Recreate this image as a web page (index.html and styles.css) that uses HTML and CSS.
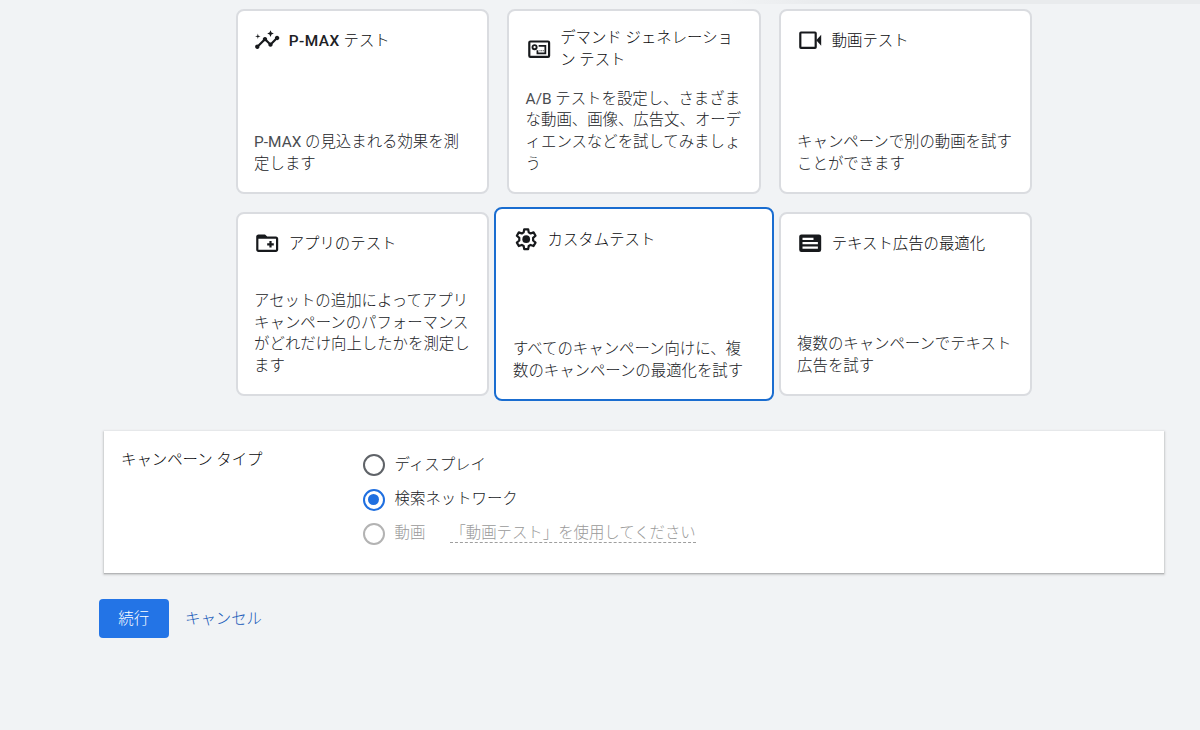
FILE: index.html
```html
<!DOCTYPE html>
<html lang="ja">
<head>
<meta charset="utf-8">
<title>テスト</title>
<link rel="stylesheet" href="styles.css">
</head>
<body>
<div class="top-edge"></div>
<main class="page">
  <section class="cards">
    <article class="card">
      <h2 class="card-title">
        <svg class="icon" viewBox="0 0 24 24"><path d="M21 8c-1.45 0-2.26 1.44-1.93 2.51l-3.55 3.56c-.3-.09-.74-.09-1.04 0l-2.55-2.55C12.27 10.45 11.46 9 10 9c-1.45 0-2.27 1.44-1.93 2.52l-4.56 4.55C2.44 15.74 1 16.55 1 18c0 1.1.9 2 2 2 1.45 0 2.26-1.44 1.93-2.51l4.55-4.56c.3.09.74.09 1.04 0l2.55 2.55C12.73 16.55 13.54 18 15 18c1.45 0 2.27-1.44 1.93-2.52l3.56-3.55C21.56 12.26 23 11.45 23 10c0-1.1-.9-2-2-2z"/><path d="M15 9l.94-2.07L18 6l-2.06-.93L15 3l-.92 2.07L12 6l2.08.93zM3.5 11L4 9l2-.5L4 8l-.5-2L3 8l-2 .5L3 9z"/></svg>
        <span class="title-text"><span class="latin">P-MAX</span> テスト</span>
      </h2>
      <p class="card-text"><span class="latin-text">P-MAX</span> の見込まれる効果を測<br>定します</p>
    </article>
    <article class="card">
      <h2 class="card-title">
        <svg class="icon" viewBox="0 0 24 24"><g fill="none" stroke="currentColor"><rect x="3" y="5" width="18" height="14" rx="1" stroke-width="2"/><circle cx="7.8" cy="10.2" r="1.9" stroke-width="1.7"/><path d="M11.5 9h6.1v6.8h-7.2V13" stroke-width="1.6"/><path d="M12.3 13.4h.9m.6 0h.9m.6 0h.9" stroke-width=".8"/></g></svg>
        <span class="title-text title-text-long">デマンド ジェネレーショ<br>ン テスト</span>
      </h2>
      <p class="card-text"><span class="latin-text">A/B</span> テストを設定し、さまざま<br>な動画、画像、広告文、オーデ<br>ィエンスなどを試してみましょ<br>う</p>
    </article>
    <article class="card">
      <h2 class="card-title">
        <svg class="icon" viewBox="0 0 24 24"><rect x="3" y="5" width="14" height="14" rx=".6" fill="none" stroke="currentColor" stroke-width="2"/><path d="M17.5 12L22 7v10z"/></svg>
        <span class="title-text">動画テスト</span>
      </h2>
      <p class="card-text">キャンペーンで別の動画を試す<br>ことができます</p>
    </article>
    <article class="card">
      <h2 class="card-title">
        <svg class="icon" viewBox="0 0 24 24"><path fill-rule="evenodd" d="M20 6h-8l-2-2H4c-1.11 0-1.99.89-1.99 2L2 18c0 1.11.89 2 2 2h16c1.11 0 2-.89 2-2V8c0-1.11-.89-2-2-2zm0 12H4V8h16v10zm-8-4h2v2h2v-2h2v-2h-2v-2h-2v2h-2z"/></svg>
        <span class="title-text">アプリのテスト</span>
      </h2>
      <p class="card-text">アセットの追加によってアプリ<br>キャンペーンのパフォーマンス<br>がどれだけ向上したかを測定し<br>ます</p>
    </article>
    <article class="card card-selected">
      <h2 class="card-title">
        <svg class="icon" viewBox="0 0 24 24"><path fill="none" stroke="currentColor" stroke-width="2" stroke-linejoin="round" d="M10.2 3h3.6l.5 2.8 1.7 1 2.7-1 1.8 3.1-2.2 1.900v2.400l2.200 1.900-1.800 3.100-2.700-1-1.700 1-.5 2.800h-3.600l-.5-2.800-1.700-1-2.700 1-1.800-3.100 2.200-1.900v-2.400l-2.200-1.900 1.800-3.100 2.700 1 1.700-1z"/><circle cx="12" cy="12" r="3.5"/></svg>
        <span class="title-text">カスタムテスト</span>
      </h2>
      <p class="card-text">すべてのキャンペーン向けに、複<br>数のキャンペーンの最適化を試す</p>
    </article>
    <article class="card">
      <h2 class="card-title">
        <svg class="icon" viewBox="0 0 24 24"><path fill-rule="evenodd" d="M4 4h16a2 2 0 0 1 2 2v12a2 2 0 0 1-2 2H4a2 2 0 0 1-2-2V6a2 2 0 0 1 2-2zM5 7v2h10V7zM5 11v2h14v-2zM5 15v2h14v-2z"/></svg>
        <span class="title-text">テキスト広告の最適化</span>
      </h2>
      <p class="card-text">複数のキャンペーンでテキスト<br>広告を試す</p>
    </article>
  </section>

  <section class="panel">
    <div class="panel-label">キャンペーン タイプ</div>
    <div class="options">
      <label class="option"><span class="radio"></span><span class="option-text">ディスプレイ</span></label>
      <label class="option"><span class="radio radio-on"></span>検索ネットワーク</label>
      <div class="option option-disabled"><span class="radio"></span>動画<span class="hint">「動画テスト」を使用してください</span></div>
    </div>
  </section>

  <div class="actions">
    <button class="btn-primary">続行</button>
    <a class="btn-text">キャンセル</a>
  </div>
</main>
</body>
</html>
```
FILE: styles.css
```css
* { box-sizing: border-box; }

body {
  margin: 0;
  height: 730px;
  overflow: hidden;
  background: #f1f3f5;
  color: #202226;
  font: 300 15.4px/21.6px Roboto, "Noto Sans CJK JP", sans-serif;
}

.top-edge {
  position: absolute;
  top: 0;
  right: 0;
  width: 472px;
  height: 4px;
  background: linear-gradient(90deg, #f1f3f5, #e9ebed 90px);
}

.page { padding: 9px 0 0 99px; }

.cards {
  display: grid;
  grid-template-columns: repeat(3, 253.5px);
  grid-auto-rows: 184.5px;
  gap: 18px;
  margin-left: 136.5px;
}

.card {
  display: flex;
  flex-direction: column;
  justify-content: space-between;
  padding: 16px 0 16.4px 16.6px;
  background: #fff;
  border: 2px solid #dadce0;
  border-radius: 8px;
  white-space: nowrap;
}

.card-selected {
  z-index: 1;
  margin: -4.5px -13.5px -5px;
  padding: 16.6px 0 16.4px 17.5px;
  border-color: #1a6dd0;
}

.card-title {
  display: flex;
  align-items: center;
  gap: 8.2px;
  min-height: 26px;
  margin: 0;
  color: #08090b;
  font-size: inherit;
  font-weight: 300;
}

.title-text { padding-top: 3.6px; }
.title-text-long { padding-top: 1.4px; }

.latin { font-weight: 500; letter-spacing: .5px; color: #202124; }
.latin-text { font-weight: 400; color: #4a4d51; }

.icon {
  flex: none;
  width: 26.4px;
  height: 26.4px;
  fill: currentColor;
  color: #17191c;
}

.card-text { margin: 0; font-weight: 300; }

.panel {
  display: flex;
  width: 1060px;
  height: 142px;
  margin: 35px 0 0 5px;
  padding: 19px 17px 17px;
  background: #fff;
  box-shadow: 0 1px 1px 0 #b4b5b7, 0 1px 2px 1px #cfd0d2;
}

.panel-label { width: 241.6px; color: #08090b; }

.options {
  display: flex;
  flex-direction: column;
  gap: 12.5px;
  padding-top: 4px;
}

.option {
  display: flex;
  align-items: center;
  height: 22px;
}

.option-text { padding-top: 1px; }

.radio {
  display: grid;
  place-items: center;
  width: 22px;
  height: 22px;
  margin-right: 10px;
  border: 2px solid #5f6368;
  border-radius: 50%;
}

.radio-on { border-color: #1f6fe0; }

.radio-on::after {
  content: "";
  width: 11px;
  height: 11px;
  border-radius: 50%;
  background: #1f6fe0;
}

.option-disabled { color: #999; }
.option-disabled .radio { border-color: #b3b3b3; }

.hint {
  height: 20px;
  margin: -2px 0 0 25px;
  line-height: 20px;
  border-bottom: 1px dashed #9e9e9e;
}

.actions {
  display: flex;
  align-items: center;
  gap: 16.5px;
  margin-top: 26px;
}

.btn-primary {
  width: 69.5px;
  height: 39px;
  padding: 3px 0 0;
  border: 0;
  border-radius: 4px;
  background: #2374e6;
  color: #fff;
  font: inherit;
}

.btn-text { padding-top: 3.4px; color: #1558b8; }
```
